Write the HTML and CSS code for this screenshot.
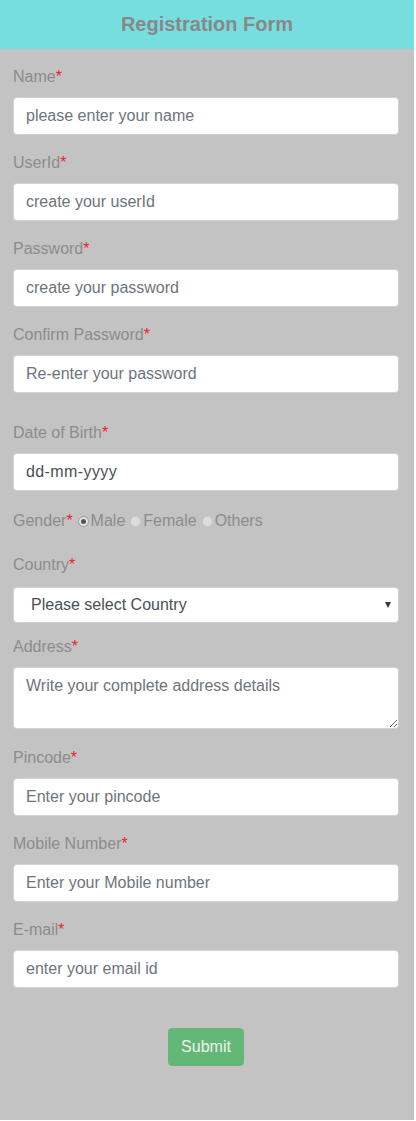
FILE: index.html
```html
<!DOCTYPE html>
<html lang="en">
<head>
<meta charset="utf-8">
<title>Registration Form</title>
<link rel="stylesheet" href="styles.css">
</head>
<body>
<div class="page">
  <header class="header">Registration Form</header>
  <form class="form">
    <div class="group">
      <label class="label">Name<span class="req">*</span></label>
      <input class="control" type="text" placeholder="please enter your name">
    </div>
    <div class="group">
      <label class="label">UserId<span class="req">*</span></label>
      <input class="control" type="text" placeholder="create your userId">
    </div>
    <div class="group">
      <label class="label">Password<span class="req">*</span></label>
      <input class="control" type="text" placeholder="create your password">
    </div>
    <div class="group">
      <label class="label">Confirm Password<span class="req">*</span></label>
      <input class="control" type="text" placeholder="Re-enter your password">
    </div>
    <div class="spacer"></div>
    <div class="group">
      <label class="label">Date of Birth<span class="req">*</span></label>
      <div class="control date">dd-mm-yyyy</div>
    </div>
    <div class="gender">
      <span>Gender<span class="req">*</span></span>
      <span class="radio checked"></span><span>Male</span>
      <span class="radio"></span><span>Female</span>
      <span class="radio"></span><span>Others</span>
    </div>
    <div class="group country">
      <label class="label">Country<span class="req">*</span></label>
      <div class="control select"><span>Please select Country</span><span class="arrow"></span></div>
    </div>
    <div class="group address">
      <label class="label">Address<span class="req">*</span></label>
      <textarea class="control area" rows="2" placeholder="Write your complete address details"></textarea>
    </div>
    <div class="group">
      <label class="label">Pincode<span class="req">*</span></label>
      <input class="control" type="text" placeholder="Enter your pincode">
    </div>
    <div class="group">
      <label class="label">Mobile Number<span class="req">*</span></label>
      <input class="control" type="text" placeholder="Enter your Mobile number">
    </div>
    <div class="group">
      <label class="label">E-mail<span class="req">*</span></label>
      <input class="control" type="text" placeholder="enter your email id">
    </div>
    <div class="actions">
      <button class="submit" type="button">Submit</button>
    </div>
  </form>
</div>
</body>
</html>
```
FILE: styles.css
```css
* { box-sizing: border-box; }
html, body { margin: 0; padding: 0; background: #ffffff; }
body { font-family: "Liberation Sans", Arial, sans-serif; font-size: 16px; line-height: 24px; }

.page {
  width: 414px;
  height: 1120px;
  background: #c3c3c3;
}

.header {
  height: 49px;
  line-height: 49px;
  background: #76dede;
  color: #888888;
  font-weight: bold;
  font-size: 20px;
  text-align: center;
}

.form {
  padding: 16px 15px 0 13px;
}

.group { margin-bottom: 16px; }

.label {
  display: block;
  color: #8c8c8c;
  margin-bottom: 8px;
  line-height: 24px;
}

.req { color: #f21d1d; }

.control {
  display: block;
  width: 100%;
  height: 38px;
  padding: 6px 12px;
  font-family: "Liberation Sans", Arial, sans-serif;
  font-size: 16px;
  line-height: 24px;
  color: #495057;
  background: #ffffff;
  border: 1px solid #ced4da;
  border-radius: 4px;
  outline: none;
  margin: 0;
}
.control::placeholder { color: #6c757d; opacity: 1; }

.spacer { height: 12px; }

.date { letter-spacing: 0.4px; }

.gender {
  display: flex;
  align-items: center;
  height: 26px;
  padding-top: 2px;
  margin-bottom: 20px;
  color: #8c8c8c;
}
.radio {
  width: 11px;
  height: 11px;
  border-radius: 50%;
  background: #dcdcdc;
  border: 1px solid #c9c9c9;
  margin: 0 2px 0 5px;
  display: inline-flex;
  align-items: center;
  justify-content: center;
}
.radio.checked { background: #e4e4e4; border-color: #9a9a9a; }
.radio.checked::after {
  content: "";
  width: 5px;
  height: 5px;
  border-radius: 50%;
  background: #555555;
}

.country { margin-bottom: 12px; }
.country .label { margin-bottom: 10px; }
.select {
  height: 36px;
  display: flex;
  align-items: center;
  justify-content: space-between;
  padding: 0 7px 0 17px;
  color: #495057;
}
.arrow {
  width: 0;
  height: 0;
  border-left: 3.5px solid transparent;
  border-right: 3.5px solid transparent;
  border-top: 6px solid #333a40;
}

.address { margin-bottom: 17px; }
.area {
  height: 62px;
  resize: vertical;
}

.actions {
  display: flex;
  justify-content: center;
  padding-top: 24px;
}
.submit {
  height: 38px;
  padding: 6px 12px;
  background: #64b877;
  color: #f0f0f0;
  border: 1px solid #64b877;
  border-radius: 4px;
  font-family: "Liberation Sans", Arial, sans-serif;
  font-size: 16px;
  line-height: 24px;
}
```
